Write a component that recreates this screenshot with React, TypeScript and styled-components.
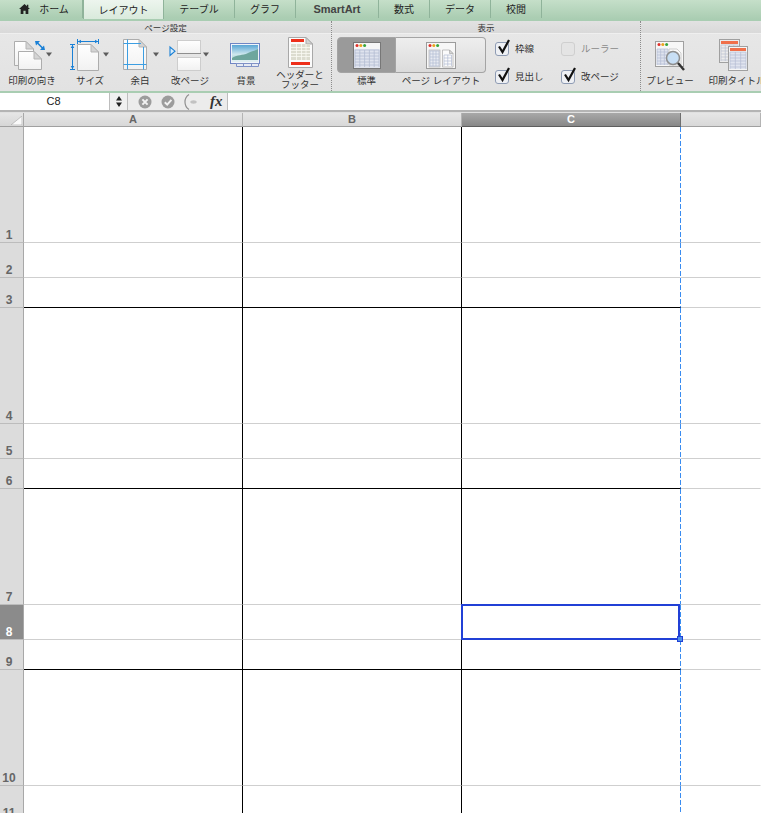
import React from 'react'
import styled, { createGlobalStyle } from 'styled-components'

const jp = `"Liberation Sans", "Noto Sans CJK JP", sans-serif`

const GlobalStyle = createGlobalStyle`
  html, body {
    margin: 0;
    padding: 0;
    height: 813px;
    overflow: hidden;
    background: #fff;
    font-family: ${jp};
  }
`

const tabs = [
  { name: 'ホーム', width: 83, home: true },
  { name: 'レイアウト', width: 81, active: true },
  { name: 'テーブル', width: 71 },
  { name: 'グラフ', width: 61 },
  { name: 'SmartArt', width: 83, latin: true },
  { name: '数式', width: 51 },
  { name: 'データ', width: 61 },
  { name: '校閲', width: 51 },
]

const rowHeights = [116, 35, 30, 116, 35, 30, 116, 35, 30, 116, 35]
const columns = ['A', 'B', 'C', 'D']
const blue = '#1a80d6'

// ribbon tool drawings use the ribbon's own pixel coordinates, x is where the tool starts
const ToolGlyph = ({ x, width, children }: { x: number; width: number; children: React.ReactNode }) => (
  <svg width={width} height="38" viewBox={`${x} 34 ${width} 38`}>
    {children}
  </svg>
)

const Sheet2 = ({ x, y, w, h }: { x: number; y: number; w: number; h: number }) => (
  <g>
    <path
      d={`M${x + 0.5} ${y + 0.5}H${x + w - 8}L${x + w - 0.5} ${y + 8}V${y + h - 0.5}H${x + 0.5}Z`}
      fill="url(#paper)"
      stroke="#adadad"
    />
    <path d={`M${x + w - 8} ${y + 0.5}V${y + 8}H${x + w - 0.5}Z`} fill="#d4d4d4" stroke="#b5b5b5" />
  </g>
)

const Paper = () => (
  <defs>
    <linearGradient id="paper" x1="0" y1="0" x2="0" y2="1">
      <stop offset="0" stopColor="#ffffff" />
      <stop offset="1" stopColor="#f1f1f1" />
    </linearGradient>
    <linearGradient id="sky" x1="0" y1="0" x2="0" y2="1">
      <stop offset="0" stopColor="#5aa6d4" />
      <stop offset="0.55" stopColor="#cfe8ee" />
      <stop offset="1" stopColor="#9ccbc6" />
    </linearGradient>
  </defs>
)

const DownCaret = ({ x }: { x: number }) => (
  <path d={`M${x} 52.5H${x + 6}L${x + 3} 56.5Z`} fill="#5c5c5c" />
)

const OrientationIcon = () => (
  <ToolGlyph x={0} width={64}>
    <Sheet2 x={14} y={41} w={20} h={25} />
    <Sheet2 x={18} y={51} w={24} h={19} />
    <path d="M37 42.5L43 48.5" stroke={blue} strokeWidth="1.6" />
    <path d="M35 41L40 41L36 45.5ZM45 50L40 50L44 45.5Z" fill={blue} />
    <DownCaret x={46} />
  </ToolGlyph>
)

const SizeIcon = () => (
  <ToolGlyph x={64} width={52}>
    <Sheet2 x={77} y={44} w={22} h={27} />
    <path d="M77.5 39V44M98.5 39V44M78 41.5H98M70 44.5H75M70 69.5H75M72.5 45V69" stroke={blue} strokeWidth="1" fill="none" />
    <path d="M78 41.5L81 39.7V43.3ZM98 41.5L95 39.7V43.3ZM72.5 45L70.7 48H74.3ZM72.5 69L70.7 66H74.3Z" fill={blue} />
    <DownCaret x={103} />
  </ToolGlyph>
)

const MarginIcon = () => (
  <ToolGlyph x={116} width={48}>
    <Sheet2 x={123} y={39} w={24} h={31} />
    <path d="M123.5 43.5H141M123.5 64.5H146.5M127.5 39.5V69.5M143.5 47V69.5" stroke="#3c9ee2" strokeWidth="1" fill="none" />
    <DownCaret x={153} />
  </ToolGlyph>
)

const BreakIcon = () => (
  <ToolGlyph x={164} width={52}>
    <rect x="177.5" y="40.5" width="23" height="13" fill="url(#paper)" stroke="#cdcdcd" />
    <rect x="177.5" y="57.5" width="23" height="13" fill="url(#paper)" stroke="#cdcdcd" />
    <path d="M177 53.5H201" stroke="#8f8f8f" />
    <path d="M170 47V55.5L175 51.2Z" fill="#d8ecfa" stroke={blue} strokeWidth="1.1" />
    <DownCaret x={203} />
  </ToolGlyph>
)

const BackgroundIcon = () => (
  <ToolGlyph x={216} width={60}>
    <rect x="230.5" y="43.5" width="29" height="20" fill="#f1f4fa" stroke="#6f86c4" />
    <rect x="232" y="45" width="26" height="17" fill="url(#sky)" />
    <path d="M232 58C238 54 242 56 248 53C252 51 255 51 258 49V60H232Z" fill="#6ea69d" />
    <path d="M232 60H258V62H232Z" fill="#dfeef0" />
    <path d="M236.5 63.5H258.5V66.5H236.5Z" fill="#e6eaf3" stroke="#7f92c6" />
    <path d="M243.5 63.5V66.5M251.5 63.5V66.5" stroke="#7f92c6" />
  </ToolGlyph>
)

const HeaderFooterIcon = () => (
  <ToolGlyph x={276} width={48}>
    <path d="M288.5 37.5H306L312.5 44V67.5H288.5Z" fill="#fbfbfb" stroke="#a8a8a8" />
    <path d="M306 37.5V44H312.5Z" fill="#d4d4d4" stroke="#a8a8a8" />
    <rect x="291" y="39" width="13" height="3" fill="#ee2f1a" />
    <rect x="291" y="44" width="19" height="16" fill="#dcdccf" />
    <path
      d="M291 47.5H310M291 50.5H310M291 53.5H310M291 56.5H310M296.5 44V60M301.5 44V60M306 44V60"
      stroke="#fafaf4"
      strokeWidth="0.8"
    />
    <rect x="291" y="62" width="19" height="3" fill="#ee2f1a" />
  </ToolGlyph>
)

const WindowDots = ({ x, y }: { x: number; y: number }) => (
  <g>
    <circle cx={x + 3.5} cy={y + 3} r="1.5" fill="#e0302a" />
    <circle cx={x + 7.3} cy={y + 3} r="1.5" fill="#eba41f" />
    <circle cx={x + 11.1} cy={y + 3} r="1.5" fill="#38a53c" />
  </g>
)

const sheetLines = (x: number, y: number, w: number, h: number, cols: number) => {
  const parts: string[] = []
  for (let i = y; i <= y + h; i += 3) parts.push(`M${x} ${i}H${x + w}`)
  for (let i = 0; i <= cols; i += 1) {
    const px = x + (w / cols) * i
    parts.push(`M${px} ${y}V${y + h}`)
  }
  return parts.join('')
}

const NormalViewIcon = () => (
  <svg width="28" height="27" viewBox="0 0 28 27">
    <rect x="0.5" y="0.5" width="27" height="26" fill="#f6f6f6" stroke="#777" />
    <WindowDots x={0.5} y={0.5} />
    <rect x="1" y="7" width="26" height="19" fill="#dfe3ee" />
    <path d={sheetLines(2, 8, 24, 17, 5)} stroke="#b3bcd2" strokeWidth="0.8" />
  </svg>
)

const PageViewIcon = () => (
  <svg width="30" height="27" viewBox="0 0 30 27">
    <rect x="0.5" y="0.5" width="29" height="26" fill="#f7f7f7" stroke="#9c9c9c" />
    <WindowDots x={0.5} y={0.5} />
    <rect x="3" y="8" width="11" height="17" fill="#e8ebf2" stroke="#b0b0b0" strokeWidth="0.7" />
    <path d={sheetLines(4, 9, 9, 15, 3)} stroke="#b3bcd2" strokeWidth="0.7" />
    <path d="M16.5 8H23.5L27 11.5V25H16.5Z" fill="#fbfbfb" stroke="#aaa" strokeWidth="0.7" />
    <path d="M23.5 8V11.5H27Z" fill="#d8d8d8" stroke="#aaa" strokeWidth="0.7" />
    <path d={sheetLines(18, 13, 7.5, 11, 2)} stroke="#b3bcd2" strokeWidth="0.7" />
  </svg>
)

const PreviewIcon = () => (
  <ToolGlyph x={641} width={58}>
    <rect x="655.5" y="41.5" width="28" height="25" fill="#f7f7f7" stroke="#a0a0a0" />
    <WindowDots x={655.5} y={41.5} />
    <rect x="657" y="49" width="11" height="16" fill="#dfe3ee" />
    <path d={sheetLines(657, 49, 11, 16, 3)} stroke="#b3bcd2" strokeWidth="0.7" />
    <path d="M669 49H677L681 53V65H669Z" fill="#fbfbfb" stroke="#bcbcbc" strokeWidth="0.7" />
    <circle cx="673" cy="58" r="6.5" fill="#c3dcf4" fillOpacity="0.92" stroke="#8e8e8e" strokeWidth="1.5" />
    <path d="M678 63L684 70" stroke="#333" strokeWidth="2.4" />
  </ToolGlyph>
)

const PrintTitleIcon = () => (
  <ToolGlyph x={699} width={76}>
    <rect x="719.5" y="39.5" width="20" height="23" fill="#ececec" stroke="#a0a0a0" />
    <rect x="721" y="41" width="17" height="3" fill="#f0704a" />
    <path d={sheetLines(721, 45, 17, 16, 4)} stroke="#b9c0d0" strokeWidth="0.7" />
    <rect x="728.5" y="46.5" width="19" height="24" fill="#f6f6f6" stroke="#a0a0a0" />
    <rect x="730" y="48" width="16" height="3" fill="#f0704a" />
    <rect x="730" y="52" width="16" height="17" fill="#e0e4ef" />
    <path d={sheetLines(730, 52, 16, 17, 3)} stroke="#b3bcd2" strokeWidth="0.7" />
  </ToolGlyph>
)

const HomeGlyph = () => (
  <svg width="11" height="10" viewBox="0 0 12 11">
    <path d="M6 0L12 5.6H10.2V11H7.2V7.4H4.8V11H1.8V5.6H0Z" fill="#222" />
    <rect x="8.6" y="0.8" width="1.6" height="3" fill="#222" />
  </svg>
)

const CancelGlyph = () => (
  <svg width="14" height="14" viewBox="0 0 14 14">
    <circle cx="7" cy="7" r="6.5" fill="#9c9c9c" />
    <path d="M4.4 4.4L9.6 9.6M9.6 4.4L4.4 9.6" stroke="#f2f2f2" strokeWidth="2" />
  </svg>
)

const ConfirmGlyph = () => (
  <svg width="14" height="14" viewBox="0 0 14 14">
    <circle cx="7" cy="7" r="6.5" fill="#9c9c9c" />
    <path d="M3.8 7.2L6.2 9.6L10.4 4.8" stroke="#f2f2f2" strokeWidth="2" fill="none" />
  </svg>
)

const FunctionDial = () => (
  <svg width="16" height="16" viewBox="0 0 16 16">
    <path d="M5 0.5A9 9 0 0 0 5 15.5" stroke="#8f8f8f" strokeWidth="1.2" fill="none" />
    <ellipse cx="9.5" cy="8" rx="3.2" ry="1.7" fill="#c2c2c2" />
  </svg>
)

const Stepper = () => (
  <svg width="6" height="11" viewBox="0 0 6 11">
    <path d="M0 4.5L3 0L6 4.5ZM0 6.5L3 11L6 6.5Z" fill="#222" />
  </svg>
)

const Check = () => (
  <CheckMark width="16" height="16" viewBox="0 0 16 16">
    <path d="M3 7.5L6.5 13L13 1" stroke="#111" strokeWidth="2.2" fill="none" />
  </CheckMark>
)

export default function App() {
  return (
    <Page>
      <GlobalStyle />
      <svg width="0" height="0" style={{ position: 'absolute' }}>
        <Paper />
      </svg>
      <TabBar>
        {tabs.map(tab => (
          <Tab key={tab.name} width={tab.width} active={tab.active} home={tab.home}>
            {tab.home && <HomeGlyph />}
            <TabLabel home={tab.home} latin={tab.latin}>{tab.name}</TabLabel>
          </Tab>
        ))}
      </TabBar>
      <Ribbon>
        <Group width={332} dotted>
          <GroupTitle>ページ設定</GroupTitle>
          <GroupBody>
            <Tool width={64}>
              <OrientationIcon />
              <ToolLabel>印刷の向き</ToolLabel>
            </Tool>
            <Tool width={52}>
              <SizeIcon />
              <ToolLabel>サイズ</ToolLabel>
            </Tool>
            <Tool width={48}>
              <MarginIcon />
              <ToolLabel>余白</ToolLabel>
            </Tool>
            <Tool width={52}>
              <BreakIcon />
              <ToolLabel>改ページ</ToolLabel>
            </Tool>
            <Tool width={60}>
              <BackgroundIcon />
              <ToolLabel>背景</ToolLabel>
            </Tool>
            <Tool width={48}>
              <HeaderFooterIcon />
              <ToolLabel two>ヘッダーと<br />フッター</ToolLabel>
            </Tool>
          </GroupBody>
        </Group>
        <Group width={309} dotted>
          <GroupTitle>表示</GroupTitle>
          <ViewBody>
            <ViewSwitch>
              <ViewButton selected><NormalViewIcon /></ViewButton>
              <ViewButton><PageViewIcon /></ViewButton>
              <ViewLabel>標準</ViewLabel>
              <ViewLabel>ページ レイアウト</ViewLabel>
            </ViewSwitch>
            <Options>
              <Option><Box><Check /></Box>枠線</Option>
              <Option disabled><Box disabled />ルーラー</Option>
              <Option><Box><Check /></Box>見出し</Option>
              <Option><Box><Check /></Box>改ページ</Option>
            </Options>
          </ViewBody>
        </Group>
        <Group width={134}>
          <GroupTitle />
          <GroupBody>
            <Tool width={58}>
              <PreviewIcon />
              <ToolLabel>プレビュー</ToolLabel>
            </Tool>
            <Tool width={76}>
              <PrintTitleIcon />
              <ToolLabel>印刷タイトル</ToolLabel>
            </Tool>
          </GroupBody>
        </Group>
      </Ribbon>
      <FormulaBar>
        <NameBox>C8</NameBox>
        <StepperBox><Stepper /></StepperBox>
        <FormulaTools>
          <CancelGlyph />
          <ConfirmGlyph />
          <FunctionDial />
          <FxLabel>fx</FxLabel>
        </FormulaTools>
        <FormulaInput />
      </FormulaBar>
      <Sheet>
        <Corner>
          <svg width="11" height="9" viewBox="0 0 11 9">
            <path d="M11 0V9H0Z" fill="#fafafa" stroke="#a5a5a5" strokeWidth="0.6" />
          </svg>
        </Corner>
        {columns.map(col => (
          <ColumnHead key={col} active={col === 'C'}>{col === 'D' ? '' : col}</ColumnHead>
        ))}
        {rowHeights.map((height, index) => {
          const row = index + 1
          return (
            <React.Fragment key={row}>
              <RowHead height={height} active={row === 8}>{row}</RowHead>
              {columns.map(col => (
                <Cell
                  key={col}
                  height={height}
                  ruled={col !== 'D' && row % 3 === 0}
                  boxed={col === 'A' || col === 'B'}
                  pageEnd={col === 'C'}
                >
                  {col === 'C' && row === 8 && (
                    <Selection>
                      <FillHandle />
                    </Selection>
                  )}
                </Cell>
              ))}
            </React.Fragment>
          )
        })}
      </Sheet>
    </Page>
  )
}

const Page = styled.div`
  width: 761px;
  height: 813px;
  overflow: hidden;
  background: #fff;
`

const TabBar = styled.div`
  display: flex;
  height: 19px;
  background: linear-gradient(#c5dfc9, #aacdb2);
  overflow: hidden;
`

const Tab = styled.div<{ width: number; active?: boolean; home?: boolean }>`
  box-sizing: border-box;
  flex: none;
  width: ${p => p.width}px;
  height: 18px;
  display: flex;
  align-items: center;
  justify-content: center;
  border-right: 1px solid #8fb39a;
  background: ${p =>
    p.active ? 'linear-gradient(#edf5ee, #d9eadc)' : 'linear-gradient(#c5dfc9, #aacdb2)'};
  font-size: 10px;
  color: #222;
  padding: 0 0 1px ${p => (p.home ? '6px' : '0')};
  ${p => (p.active ? 'height: 19px; border-left: 1px solid #8fb39a;' : '')}
`

const TabLabel = styled.span<{ home?: boolean; latin?: boolean }>`
  margin-left: ${p => (p.home ? '9px' : '0')};
  ${p => (p.latin ? 'font-size: 11px; font-weight: 700; color: #444;' : '')}
`

const Ribbon = styled.div`
  display: flex;
  box-sizing: border-box;
  height: 74px;
  background: linear-gradient(#e8e8e8, #e2e2e2);
  border-top: 2px solid #a9cdb2;
  border-bottom: 2px solid #a9cdb2;
  overflow: hidden;
`

const Group = styled.div<{ width: number; dotted?: boolean }>`
  flex: none;
  box-sizing: border-box;
  width: ${p => p.width}px;
  display: flex;
  flex-direction: column;
  ${p => (p.dotted ? 'border-right: 1px dotted #8c8c8c;' : '')}
`

const GroupTitle = styled.div`
  height: 12px;
  line-height: 14px;
  font-size: 8.5px;
  text-align: center;
  color: #333;
  background: linear-gradient(#e2e2e2, #d9d9d9);
  border-bottom: 1px solid #efefef;
`

const GroupBody = styled.div`
  display: flex;
`

const Tool = styled.div<{ width: number }>`
  flex: none;
  width: ${p => p.width}px;
  display: flex;
  flex-direction: column;
  align-items: center;
  svg {
    display: block;
    flex: none;
  }
`

const ToolLabel = styled.div<{ two?: boolean }>`
  font-size: 9.5px;
  line-height: ${p => (p.two ? '10px' : '14px')};
  margin-top: ${p => (p.two ? '-2px' : '2px')};
  text-align: center;
  color: #333;
  white-space: nowrap;
`

const ViewBody = styled.div`
  display: flex;
  padding: 3px 0 0 5px;
`

const ViewSwitch = styled.div`
  display: grid;
  grid-template-columns: 59px 90px;
  grid-template-rows: 36px auto;
  flex: none;
`

const ViewButton = styled.div<{ selected?: boolean }>`
  box-sizing: border-box;
  display: flex;
  align-items: center;
  justify-content: center;
  border: 1px solid #a4a4a4;
  border-left-width: ${p => (p.selected ? '1px' : '0')};
  border-radius: ${p => (p.selected ? '4px 0 0 4px' : '0 4px 4px 0')};
  background: ${p => (p.selected ? '#9a9a9a' : 'linear-gradient(#eeeeee, #dbdbdb)')};
`

const ViewLabel = styled.div`
  font-size: 9.5px;
  line-height: 14px;
  margin-top: 1px;
  text-align: center;
  color: #333;
  white-space: nowrap;
`

const Options = styled.div`
  display: grid;
  grid-template-columns: 66px 70px;
  grid-template-rows: 28px 28px;
  margin: 5px 0 0 9px;
`

const Option = styled.div<{ disabled?: boolean }>`
  display: flex;
  align-items: flex-start;
  gap: 6px;
  font-size: 9.5px;
  line-height: 14px;
  color: ${p => (p.disabled ? '#8a8a8a' : '#333')};
  white-space: nowrap;
`

const Box = styled.div<{ disabled?: boolean }>`
  position: relative;
  box-sizing: border-box;
  flex: none;
  width: 14px;
  height: 14px;
  border: 1px solid ${p => (p.disabled ? '#cfcfcf' : '#8e9bb3')};
  border-radius: 3px;
  background: ${p => (p.disabled ? '#e4e4e4' : '#eef0f4')};
`

const CheckMark = styled.svg`
  position: absolute;
  left: 0;
  top: -4px;
`

const FormulaBar = styled.div`
  display: flex;
  height: 17px;
  background: #fff;
  border-bottom: 2px solid #b4b4b4;
`

const NameBox = styled.div`
  box-sizing: border-box;
  flex: none;
  width: 110px;
  line-height: 17px;
  text-align: center;
  font-size: 11px;
  color: #222;
  padding-right: 2px;
  border-right: 1px solid #bdbdbd;
`

const StepperBox = styled.div`
  box-sizing: border-box;
  flex: none;
  width: 18px;
  display: flex;
  align-items: center;
  justify-content: center;
  background: #f0f0f0;
  border-right: 1px solid #bdbdbd;
`

const FormulaTools = styled.div`
  box-sizing: border-box;
  flex: none;
  width: 100px;
  display: flex;
  align-items: center;
  gap: 9px;
  padding-left: 10px;
  background: #ececec;
  border-right: 1px solid #bdbdbd;
`

const FxLabel = styled.span`
  font-family: "Liberation Serif", serif;
  font-style: italic;
  font-weight: 700;
  font-size: 15px;
  line-height: 15px;
  color: #333;
  margin-left: 1px;
`

const FormulaInput = styled.div`
  flex: 1;
`

const Sheet = styled.div`
  display: grid;
  grid-template-columns: 24px 219px 219px 219px 1fr;
  border-top: 1px solid #e0e0e0;
`

const Corner = styled.div`
  box-sizing: border-box;
  height: 14px;
  display: flex;
  align-items: flex-end;
  justify-content: flex-end;
  padding: 0 1px 1px 0;
  background: linear-gradient(#e6e6e6, #d6d6d6);
  border-right: 1px solid #a8a8a8;
  border-bottom: 1px solid #a0a0a0;
`

const ColumnHead = styled.div<{ active?: boolean }>`
  box-sizing: border-box;
  height: 14px;
  line-height: 13px;
  text-align: center;
  font-size: 11px;
  font-weight: 700;
  color: ${p => (p.active ? '#fff' : '#666')};
  background: ${p =>
    p.active ? 'linear-gradient(#a8a8a8, #888888)' : 'linear-gradient(#e6e6e6, #d8d8d8)'};
  border-right: 1px solid ${p => (p.active ? '#6e6e6e' : '#b4b4b4')};
  border-bottom: 1px solid ${p => (p.active ? '#5e5e5e' : '#a0a0a0')};
`

const RowHead = styled.div<{ height: number; active?: boolean }>`
  box-sizing: border-box;
  height: ${p => p.height}px;
  display: flex;
  align-items: flex-end;
  justify-content: center;
  padding: 0 5px 0 0;
  font-size: 12px;
  font-weight: 700;
  line-height: 14px;
  color: ${p => (p.active ? '#fff' : '#666')};
  background: ${p => (p.active ? '#8b8b8b' : '#dcdcdc')};
  border-right: 1px solid #a8a8a8;
  border-bottom: 1px solid #bcbcbc;
`

const Cell = styled.div<{ height: number; ruled?: boolean; boxed?: boolean; pageEnd?: boolean }>`
  position: relative;
  box-sizing: border-box;
  height: ${p => p.height}px;
  background-color: #fff;
  border-bottom: 1px solid ${p => (p.ruled ? '#000' : '#cfcfcf')};
  border-right: 1px solid ${p => (p.boxed ? '#000' : 'transparent')};
  ${p =>
    p.pageEnd
      ? `background-image: repeating-linear-gradient(#3a8cf0 0 5px, transparent 5px 7px);
         background-size: 1px 100%;
         background-position: right top;
         background-repeat: no-repeat;
         background-origin: border-box;
         background-clip: border-box;`
      : ''}
`

const Selection = styled.div`
  position: absolute;
  z-index: 1;
  left: -1px;
  top: -1px;
  right: 0;
  bottom: -1px;
  border: 2px solid #2140d6;
`

const FillHandle = styled.div`
  position: absolute;
  right: -5px;
  bottom: -4px;
  box-sizing: border-box;
  width: 6px;
  height: 6px;
  background: #4f8fe8;
  border: 1px solid #2140d6;
`
